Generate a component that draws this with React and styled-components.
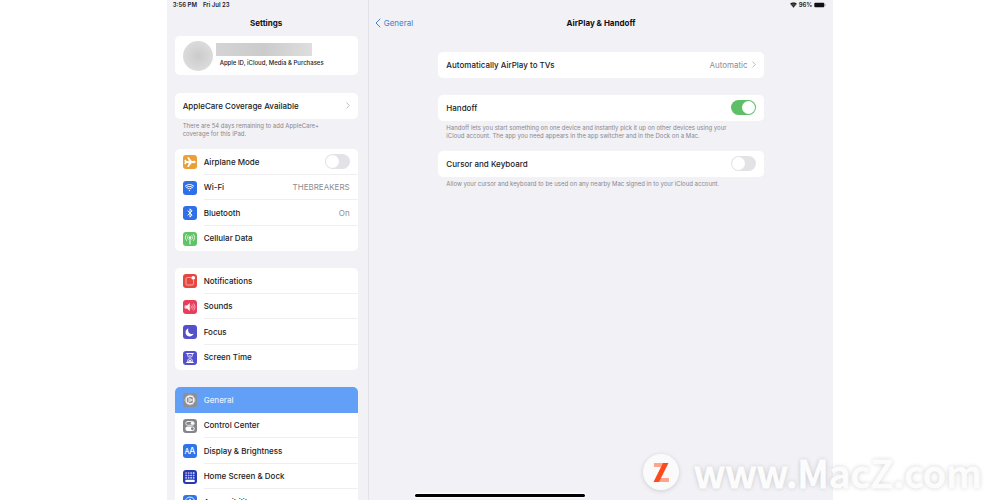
import React, { useState } from "react";
import styled, { createGlobalStyle, css } from "styled-components";
import { Bluetooth } from "lucide-react";
import { IoAirplane, IoMoon, IoWifi } from "react-icons/io5";

const GlobalStyle = createGlobalStyle`
  *,
  *::before,
  *::after {
    box-sizing: border-box;
  }

  body {
    margin: 0;
    background: #ffffff;
    color: #1b1b1d;
    font-family: Inter, "Liberation Sans", sans-serif;
    font-size: 8px;
    line-height: 10px;
    overflow: hidden;
  }

  h1,
  p {
    margin: 0;
  }

  a {
    color: inherit;
    text-decoration: none;
  }
`;

const Page = styled.div`
  position: relative;
  display: grid;
  grid-template-columns: 1fr 4fr 1fr;
  grid-template-rows: 100vh;
`;

const Screen = styled.div`
  position: relative;
  grid-column: 2;
  display: grid;
  grid-template-columns: minmax(202px, 3fr) 7fr;
  background: #f2f1f6;
  overflow: hidden;
`;

const Sidebar = styled.aside`
  min-height: 0;
  padding: 0 10px 0 8px;
  border-right: 1px solid #e3e2e8;
  overflow: hidden;
`;

const Detail = styled.main`
  min-width: 0;
`;

const StatusBar = styled.div`
  display: flex;
  align-items: center;
  justify-content: ${({ $end }) => ($end ? "flex-end" : "flex-start")};
  gap: ${({ $end }) => ($end ? "2px" : "6px")};
  height: 10px;
  padding: ${({ $end }) => ($end ? "0 7px 0 0" : "0")};
  margin-left: ${({ $end }) => ($end ? "0" : "-2px")};
  font-size: 6px;
  font-weight: 600;
`;

const TitleBar = styled.header`
  display: grid;
  grid-template-columns: 1fr auto 1fr;
  align-items: center;
  height: 26px;
  padding: 0 6px;
`;

const Title = styled.h1`
  grid-column: 2;
  font-size: 8px;
  font-weight: 700;
  line-height: 10px;
  color: #111113;
`;

const BackLink = styled.a`
  display: flex;
  align-items: center;
  gap: 3px;
  color: #3f84d2;
  font-size: 8px;
`;

const cardStyles = css`
  background: #ffffff;
  border-radius: 5px;
  overflow: hidden;
`;

const ProfileCard = styled.a`
  ${cardStyles}
  display: flex;
  align-items: center;
  gap: 3px;
  height: 39px;
  padding: 0 8px;
  margin-bottom: 18px;
`;

const Avatar = styled.span`
  flex: none;
  width: 30px;
  height: 30px;
  border-radius: 50%;
  background: radial-gradient(circle, #cbcbcb 0%, #d9d9d9 60%, #e2e2e2 100%);
`;

const ProfileText = styled.span`
  display: flex;
  flex-direction: column;
  gap: 2px;
  font-size: 6px;
  font-weight: 500;
`;

const HiddenName = styled.span`
  width: 96px;
  height: 13px;
  background: linear-gradient(90deg, #d4d4d4, #cbcbcb 50%, #dedede);
`;

const ProfileCaption = styled.span`
  padding-left: 4px;
`;

const Group = styled.div`
  ${cardStyles}
  display: grid;
  grid-auto-rows: 26px 25px;
  margin-bottom: ${({ $hasNote }) => ($hasNote ? "0" : "17px")};
`;

const rowStyles = css`
  display: flex;
  align-items: center;
  gap: 7px;
  padding-left: 8px;
  font-weight: 500;
  background: ${({ $active }) => ($active ? "#629ff7" : "transparent")};
  color: ${({ $active }) => ($active ? "#e6f0ff" : "inherit")};
`;

const LinkRow = styled.a`
  ${rowStyles}
`;

const SwitchRow = styled.label`
  ${rowStyles}
`;

const RowBody = styled.span`
  flex: 1;
  display: flex;
  align-items: center;
  gap: 4px;
  height: 100%;
  padding-right: 8px;
  border-bottom: 1px solid ${({ $line }) => ($line ? "#efeff2" : "transparent")};
`;

const RowLabel = styled.span`
  flex: 1;
`;

const RowValue = styled.span`
  color: #8c8c90;
  font-weight: 400;
`;

const Switch = styled.input`
  appearance: none;
  display: flex;
  align-items: center;
  justify-content: ${({ checked }) => (checked ? "flex-end" : "flex-start")};
  width: 25px;
  height: 15px;
  margin: 0;
  padding: 1px;
  border-radius: 8px;
  background: ${({ checked }) => (checked ? "#5fbf68" : "#e3e2e7")};

  &::before {
    content: "";
    width: 13px;
    height: 13px;
    border-radius: 50%;
    background: #ffffff;
  }
`;

const Footnote = styled.p`
  padding: 3px 20px 0 8px;
  margin-bottom: 11px;
  color: #88888d;
  font-size: 6px;
  line-height: 8px;
`;

const Tile = styled.span`
  flex: none;
  display: grid;
  place-items: center;
  width: 14px;
  height: 14px;
  border-radius: 3px;
  background: ${({ $color }) => $color};
  color: #ffffff;
`;

const Panels = styled.div`
  width: 70%;
  max-width: 640px;
  margin: 0 auto;
  padding-top: 16px;
`;

const HomeIndicator = styled.div`
  position: absolute;
  left: 50%;
  bottom: 3px;
  width: 170px;
  height: 3px;
  margin-left: -85px;
  border-radius: 2px;
  background: #000000;
  box-shadow: 0 0 2px 1px #ffffff;
`;

const Watermark = styled.div`
  position: absolute;
  right: 18px;
  bottom: 8px;
  display: flex;
  align-items: center;
  gap: 15px;
  color: #fcfcfc;
  font-family: "Noto Sans CJK SC", sans-serif;
  font-size: 38px;
  font-weight: 500;
  line-height: 40px;
  -webkit-text-stroke: 1px #fcfcfc;
  text-shadow: 0 0 5px rgba(0, 0, 0, 0.22);
`;

const WatermarkLogo = styled.svg`
  flex: none;
  width: 36px;
  height: 36px;
  border-radius: 50%;
  box-shadow: 0 1px 5px rgba(0, 0, 0, 0.15);
`;

const Chevron = ({ back }) => (
  <svg
    width={back ? 6 : 4}
    height={back ? 10 : 7}
    viewBox={back ? "0 0 6 10" : "0 0 4 7"}
    fill="none"
    stroke={back ? "#3f84d2" : "#bdbdc2"}
    strokeWidth="1"
    strokeLinecap="round"
    strokeLinejoin="round"
  >
    <path d={back ? "M5 1 1 5l4 4" : "M.7.8 3.3 3.5.7 6.2"} />
  </svg>
);

const Battery = () => (
  <svg width="12" height="6" viewBox="0 0 12 6">
    <rect x=".3" y=".8" width="10" height="4.4" rx="1" fill="#111" />
    <path d="M10.8 2v2c.5-.1.7-.5.7-1s-.2-.9-.7-1Z" fill="#777" />
  </svg>
);

const StatusWifi = () => (
  <svg width="7" height="6" viewBox="0 0 14 11">
    <path d="M7 11 .2 3.2C4 -.6 10 -.6 13.8 3.2Z" fill="#111" />
    <path
      d="M2.2 5.5c2.7-2.5 6.9-2.5 9.6 0M4.3 8c1.5-1.5 3.9-1.5 5.4 0"
      fill="none"
      stroke="#f2f1f6"
      strokeWidth=".7"
    />
  </svg>
);

const Glyph = ({ children }) => (
  <svg
    width="14"
    height="14"
    viewBox="0 0 28 28"
    fill="none"
    stroke="#fff"
    strokeLinecap="round"
    strokeLinejoin="round"
  >
    {children}
  </svg>
);

const CellularGlyph = () => (
  <Glyph>
    <circle cx="14" cy="11" r="2.4" fill="#fff" stroke="none" />
    <path d="M14 12v12" strokeWidth="2" />
    <path
      d="M10.2 7.5c-1.6 2-1.6 5 0 7M17.8 7.5c1.6 2 1.6 5 0 7M7 5c-3 3.5-3 8.500 0 12M21 5c3 3.5 3 8.500 0 12"
      strokeWidth="1.6"
    />
  </Glyph>
);

const NotificationsGlyph = () => (
  <Glyph>
    <path
      d="M16 7H8.500A2.500 2.500 0 0 0 6 9.500v10A2.500 2.500 0 0 0 8.500 22h10a2.500 2.500 0 0 0 2.500-2.500V12"
      stroke="#ffc9c4"
      strokeWidth="1.5"
    />
    <circle cx="20.5" cy="7.5" r="3.7" fill="#fff" stroke="none" />
  </Glyph>
);

const SoundsGlyph = () => (
  <Glyph>
    <path d="M4.5 11.5h3.500l5-4.500v14l-5-4.500H4.500Z" fill="#fff" strokeWidth="1" />
    <path
      d="M16 11.5c1.2 1.5 1.2 3.5 0 5M18.8 9.500c2.2 2.7 2.2 6.3 0 9M21.6 7.5c3.2 4 3.2 9 0 13"
      strokeWidth="1.4"
      opacity=".8"
    />
  </Glyph>
);

const HourglassGlyph = () => (
  <Glyph>
    <path d="M7.5 5h13M7.500 23h13" strokeWidth="2.4" />
    <path
      d="M9.500 6v3c0 2.500 3.500 3.500 3.500 5s-3.500 2.500-3.500 5v3h9v-3c0-2.500-3.500-3.500-3.500-5s3.500-2.500 3.500-5V6"
      strokeWidth="1.8"
    />
    <path d="m14 16.500 3.500 4.500h-7ZM11.500 9h5L14 12Z" fill="#fff" stroke="none" />
  </Glyph>
);

const GearGlyph = () => (
  <Glyph>
    <circle cx="14" cy="14" r="9.7" strokeWidth="1.5" strokeDasharray="1.5 1.55" strokeLinecap="butt" />
    <circle cx="14" cy="14" r="7.8" strokeWidth="2.4" />
    <circle cx="14" cy="14" r="2.6" strokeWidth="1.5" />
    <path d="M16.500 14H22M12.700 11.800 10 7.200M12.700 16.200 10 20.800" strokeWidth="1.5" />
  </Glyph>
);

const ControlGlyph = () => (
  <Glyph>
    <rect x="5.5" y="5" width="17" height="7.5" rx="3.7" strokeWidth="1.6" />
    <circle cx="18.700" cy="8.7" r="3" fill="#fff" stroke="none" />
    <rect x="4.7" y="15" width="18.6" height="9" rx="4.5" fill="#fff" stroke="none" />
    <circle cx="18.700" cy="19.5" r="2.800" fill="#858589" stroke="none" />
  </Glyph>
);

const DisplayGlyph = () => (
  <svg width="14" height="14" viewBox="0 0 28 28" fill="#fff" fontWeight="500">
    <text x="3" y="20" fontSize="14">
      A
    </text>
    <text x="12" y="20" fontSize="18">
      A
    </text>
  </svg>
);

const HOME_COLORS = ["#ff9a9a", "#e3a6e8", "#9fdcff", "#ffffff"];

const HomeGlyph = () => (
  <Glyph>
    {[0, 1, 2].map((row) =>
      [0, 1, 2, 3].map((col) => (
        <rect
          key={`${row}-${col}`}
          x={4.5 + col * 5}
          y={4.5 + row * 4.8}
          width="3.5"
          height="3.2"
          rx=".8"
          fill={row === 0 ? HOME_COLORS[col] : "#b9c4f7"}
          stroke="none"
        />
      ))
    )}
    <rect x="4.5" y="19.5" width="19" height="4.5" rx="1.3" fill="#fff" stroke="none" />
  </Glyph>
);

const AccessibilityGlyph = () => (
  <Glyph>
    <circle cx="14" cy="14" r="9.8" strokeWidth="1.7" />
    <circle cx="14" cy="9" r="1.7" fill="#fff" stroke="none" />
    <path d="m8.8 12 5.200 1 5.200-1M14 13v3.500l-2.600 5M14 16.500l2.600 5" strokeWidth="1.7" />
  </Glyph>
);

const connectivity = [
  { label: "Airplane Mode", color: "#ec9f36", icon: <IoAirplane size={12} />, toggle: true },
  { label: "Wi-Fi", color: "#2f6fe8", icon: <IoWifi size={11} />, value: "THEBREAKERS" },
  {
    label: "Bluetooth",
    color: "#2f6fe8",
    icon: <Bluetooth size={10} strokeWidth={2.4} />,
    value: "On",
  },
  { label: "Cellular Data", color: "#5fc466", icon: <CellularGlyph /> },
];

const alerts = [
  { label: "Notifications", color: "#e6483f", icon: <NotificationsGlyph /> },
  { label: "Sounds", color: "#e83e5c", icon: <SoundsGlyph /> },
  { label: "Focus", color: "#5450cb", icon: <IoMoon size={9} /> },
  { label: "Screen Time", color: "#5450cb", icon: <HourglassGlyph /> },
];

const system = [
  { label: "General", color: "#8e8e93", icon: <GearGlyph />, active: true },
  { label: "Control Center", color: "#858589", icon: <ControlGlyph /> },
  { label: "Display & Brightness", color: "#2f74ea", icon: <DisplayGlyph /> },
  { label: "Home Screen & Dock", color: "#2439b4", icon: <HomeGlyph /> },
  { label: "Accessibility", color: "#2f74ea", icon: <AccessibilityGlyph /> },
];

const Row = ({ item, line }) => {
  const [on, setOn] = useState(Boolean(item.on));
  const Wrapper = item.toggle ? SwitchRow : LinkRow;

  return (
    <Wrapper href={item.toggle ? undefined : "#"} $active={item.active}>
      {item.icon && <Tile $color={item.color}>{item.icon}</Tile>}
      <RowBody $line={line && !item.active}>
        <RowLabel>{item.label}</RowLabel>
        {item.value && <RowValue>{item.value}</RowValue>}
        {item.more && <Chevron />}
        {item.toggle && (
          <Switch type="checkbox" checked={on} onChange={() => setOn(!on)} />
        )}
      </RowBody>
    </Wrapper>
  );
};

const RowGroup = ({ items, note }) => (
  <>
    <Group $hasNote={Boolean(note)}>
      {items.map((item, index) => (
        <Row key={item.label} item={item} line={index < items.length - 1} />
      ))}
    </Group>
    {note && <Footnote>{note}</Footnote>}
  </>
);

const App = () => {
  return (
    <Page>
      <GlobalStyle />
      <Screen>
        <Sidebar>
          <StatusBar>
            <span>3:56 PM</span>
            <span>Fri Jul 23</span>
          </StatusBar>
          <TitleBar>
            <Title>Settings</Title>
          </TitleBar>
          <ProfileCard href="#">
            <Avatar />
            <ProfileText>
              <HiddenName />
              <ProfileCaption>Apple ID, iCloud, Media &amp; Purchases</ProfileCaption>
            </ProfileText>
          </ProfileCard>
          <RowGroup
            items={[{ label: "AppleCare Coverage Available", more: true }]}
            note="There are 54 days remaining to add AppleCare+ coverage for this iPad."
          />
          <RowGroup items={connectivity} />
          <RowGroup items={alerts} />
          <RowGroup items={system} />
        </Sidebar>
        <Detail>
          <StatusBar $end>
            <StatusWifi />
            <span>96%</span>
            <Battery />
          </StatusBar>
          <TitleBar>
            <BackLink href="#">
              <Chevron back />
              General
            </BackLink>
            <Title>AirPlay &amp; Handoff</Title>
          </TitleBar>
          <Panels>
            <RowGroup
              items={[{ label: "Automatically AirPlay to TVs", value: "Automatic", more: true }]}
            />
            <RowGroup
              items={[{ label: "Handoff", toggle: true, on: true }]}
              note="Handoff lets you start something on one device and instantly pick it up on other devices using your iCloud account. The app you need appears in the app switcher and in the Dock on a Mac."
            />
            <RowGroup
              items={[{ label: "Cursor and Keyboard", toggle: true }]}
              note="Allow your cursor and keyboard to be used on any nearby Mac signed in to your iCloud account."
            />
          </Panels>
        </Detail>
        <HomeIndicator />
      </Screen>
      <Watermark>
        <WatermarkLogo viewBox="0 0 36 36">
          <circle cx="18" cy="18" r="18" fill="#fafafa" />
          <path d="M11 9h13l-2 4H11ZM12 28l2-4h12v4Z" fill="#fba58c" />
          <path d="M20 9h5.500L16 28h-5.500Z" fill="#fb4a1c" />
        </WatermarkLogo>
        <span>www.MacZ.com</span>
      </Watermark>
    </Page>
  );
};

export default App;
